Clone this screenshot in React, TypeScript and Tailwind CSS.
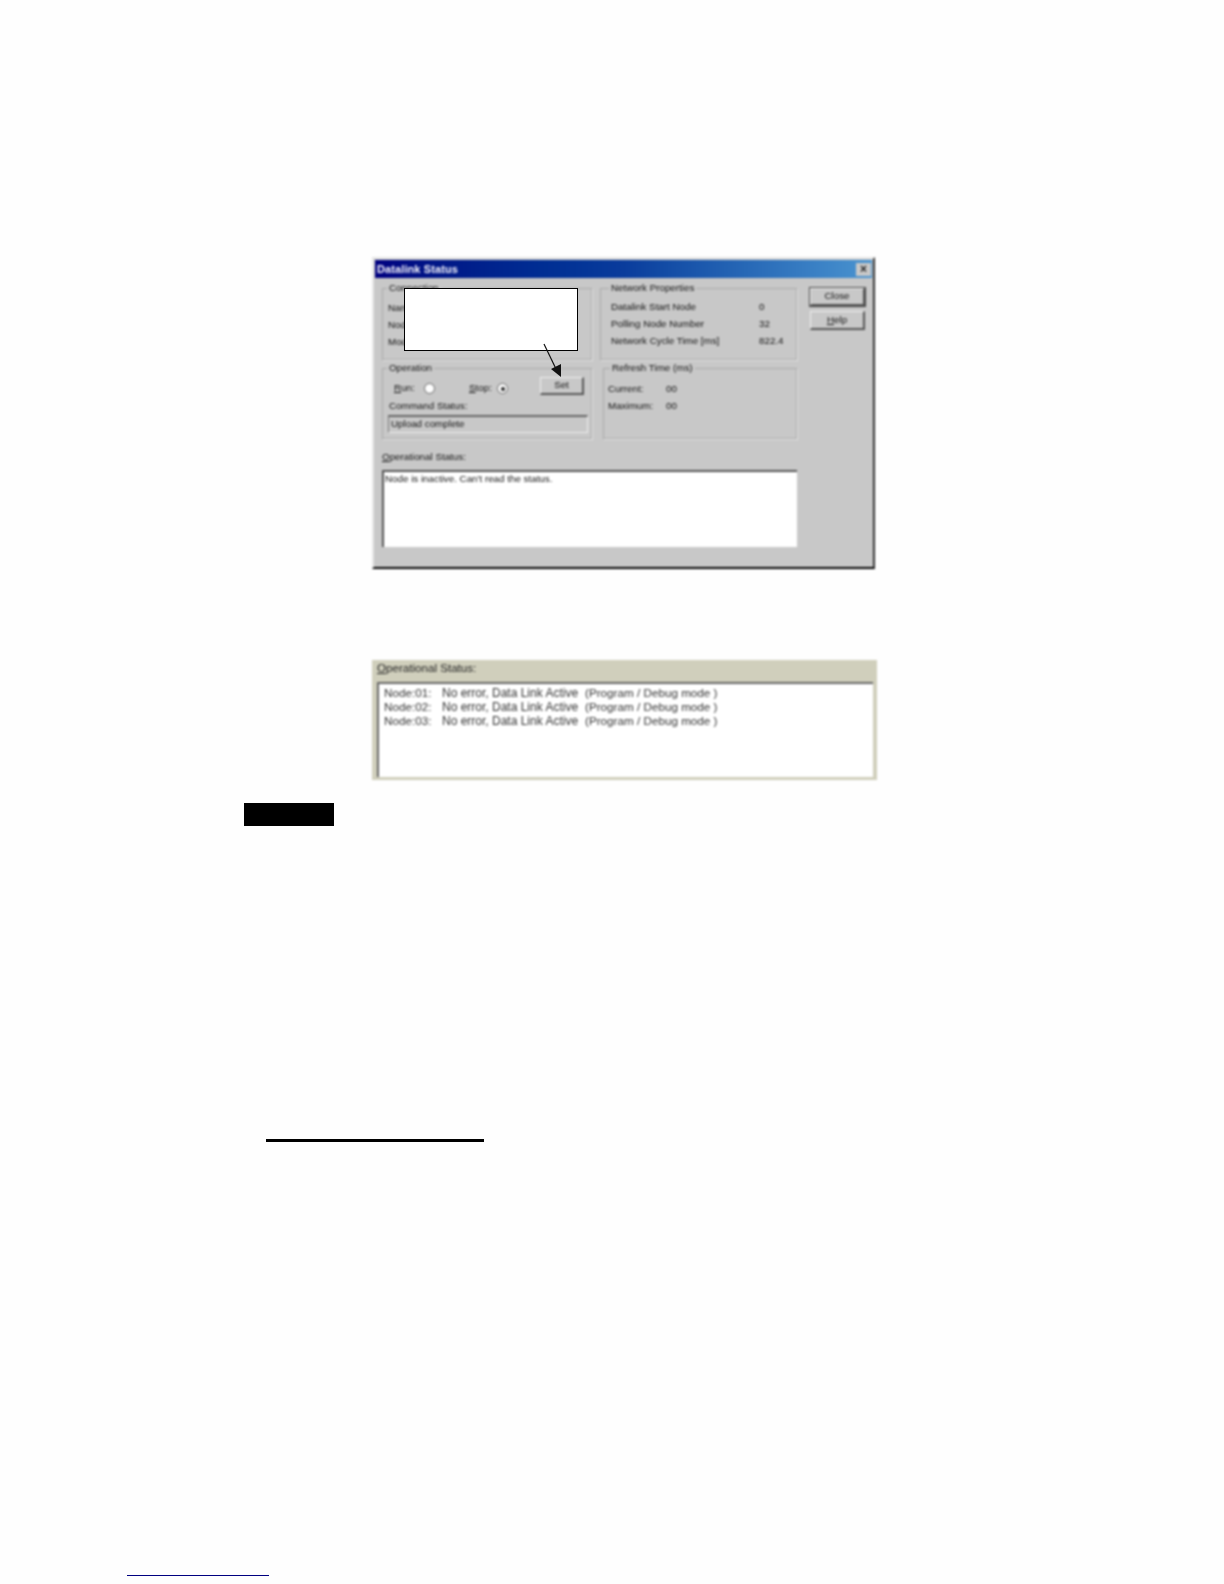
const font = "font-['Liberation_Sans',Arial,sans-serif]";

function Group({ title, className, legend, children }: { title: string; className: string; legend: string; children?: React.ReactNode }) {
  return (
    <div className={`relative border border-[#a9a9a9] shadow-[1px_1px_0_#e4e4e4] ${className}`}>
      <span className={`absolute -top-[8px] bg-[#c8c8c8] px-[2px] leading-[14px] ${legend}`}>{title}</span>
      {children}
    </div>
  );
}

function Btn({ children, className }: { children: React.ReactNode; className: string }) {
  return (
    <div
      className={`flex items-center justify-center border-t border-l border-t-[#f0f0f0] border-l-[#f0f0f0] border-r-2 border-b-2 border-r-[#555] border-b-[#555] ${className}`}
    >
      {children}
    </div>
  );
}

function Radio({ checked, className }: { checked?: boolean; className: string }) {
  return (
    <span className={`flex h-[11px] w-[11px] items-center justify-center rounded-full border border-[#666] bg-white ${className}`}>
      {checked && <span className="h-[4px] w-[4px] rounded-full bg-[#222]" />}
    </span>
  );
}

function Row({ label, value }: { label: string; value: string }) {
  return (
    <div className="flex h-[17px] items-center">
      <span className="w-[148px]">{label}</span>
      <span>{value}</span>
    </div>
  );
}

function DatalinkDialog() {
  return (
    <div className="flex h-[312px] w-[503px] flex-col border-t-2 border-l-2 border-t-[#e6e6e6] border-l-[#e6e6e6] border-r-2 border-b-2 border-r-[#333] border-b-[#000] bg-[#c8c8c8] text-[9.8px] text-[#111]">
      <div className="mx-[1px] mt-[1px] flex h-[18px] items-center justify-between bg-gradient-to-r from-[#000080] via-[#0a3c9c] to-[#4a94d0] pl-[2px] pr-[1px] text-[11px] font-bold tracking-[0.1px] text-[#f4f4fc]">
        <span>Datalink Status</span>
        <span className="flex h-[13px] w-[15px] items-center justify-center bg-[#c8c8c8] text-[12px] leading-none text-[#222]">×</span>
      </div>

      <div className="mt-[10px] flex">
        <div className="ml-[8px] flex w-[415px] flex-col">
          <div className="flex gap-[8px]">
            <Group title="Connection" legend="left-[4px]" className="h-[72px] w-[210px]">
              <div className="pl-[5px] pt-[10px]">
                <div className="h-[17px] leading-[17px]">Name:</div>
                <div className="h-[17px] leading-[17px]">Node:</div>
                <div className="h-[17px] leading-[17px]">Mode:</div>
              </div>
            </Group>
            <Group title="Network Properties" legend="left-[8px]" className="h-[72px] w-[197px]">
              <div className="pl-[10px] pt-[10px]">
                <Row label="Datalink Start Node" value="0" />
                <Row label="Polling Node Number" value="32" />
                <Row label="Network Cycle Time [ms]" value="822.4" />
              </div>
            </Group>
          </div>

          <div className="mt-[8px] flex gap-[11px]">
            <Group title="Operation" legend="left-[4px]" className="h-[71px] w-[210px]">
              <div className="mt-[8px] flex h-[18px] items-center pl-[11px] pr-[7px]">
                <span className="mt-[5px] w-[30px]"><span className="underline">R</span>un:</span>
                <Radio className="mt-[5px]" />
                <span className="ml-[34px] mt-[5px] w-[28px]"><span className="underline">S</span>top:</span>
                <Radio checked className="mt-[5px]" />
                <Btn className="ml-auto h-[18px] w-[44px]">Set</Btn>
              </div>
              <div className="pl-[6px] pt-[4px] leading-[14px]">Command Status:</div>
              <div className="ml-[5px] mt-[2px] flex h-[18px] w-[200px] items-center border-t-2 border-l border-t-[#666] border-l-[#777] border-r border-b border-r-[#eee] border-b-[#eee] pl-[2px]">
                Upload complete
              </div>
            </Group>
            <Group title="Refresh Time (ms)" legend="left-[6px]" className="h-[71px] w-[194px]">
              <div className="pl-[4px] pt-[12px]">
                <div className="flex h-[17px] items-center"><span className="w-[58px]">Current:</span><span>00</span></div>
                <div className="flex h-[17px] items-center"><span className="w-[58px]">Maximum:</span><span>00</span></div>
              </div>
            </Group>
          </div>

          <div className="mt-[11px] leading-[14px]"><span className="underline">O</span>perational Status:</div>
          <div className="mt-[6px] h-[77px] border-t-2 border-l-2 border-t-[#555] border-l-[#555] bg-white pl-[1px] leading-[13px]">
            Node is inactive. Can't read the status.
          </div>
        </div>

        <div className="ml-[13px] flex flex-col gap-[5px]">
          <Btn className="h-[18px] w-[55px] outline outline-1 outline-[#444]">Close</Btn>
          <Btn className="h-[19px] w-[55px]"><span><span className="underline">H</span>elp</span></Btn>
        </div>
      </div>
    </div>
  );
}

function NodeLine({ node }: { node: string }) {
  return (
    <div className="flex h-[14px] items-center">
      <span className="w-[58px]">Node:{node}:</span>
      <span className="w-[143px] text-[12px]">No error, Data Link Active</span>
      <span>(Program / Debug mode )</span>
    </div>
  );
}

export default function App() {
  return (
    <div className={`${font} min-h-[1584px] w-[1224px] overflow-hidden bg-[#fefefe]`}>
      <div className="relative ml-[372px] mt-[257px] inline-block align-top">
        <div className="blur-[0.8px]">
          <DatalinkDialog />
        </div>
        {/* callout pasted over the screenshot */}
        <div className="absolute left-[32px] top-[31px] h-[63px] w-[174px] border-[1.5px] border-black bg-white" />
        <svg className="absolute left-[165px] top-[81px]" width="30" height="42" viewBox="0 0 30 42">
          <path d="M7 6 L20 33" stroke="#111" strokeWidth="1.2" fill="none" />
          <path d="M24 39 L14 31 L24 26 Z" fill="#111" />
        </svg>
      </div>

      <div className="ml-[372px] mt-[91px] h-[120px] w-[505px] bg-[#d0cfbc] blur-[0.8px]">
        <div className="flex h-[22px] items-end pb-[7px] pl-[5px] text-[11.6px] leading-[14px] text-[#222]">
          <span><span className="underline">O</span>perational Status:</span>
        </div>
        <div className="ml-[5px] mr-[4px] h-[95px] border-t-2 border-l-2 border-t-[#666] border-l-[#666] bg-white pl-[5px] pt-[2px] text-[11.7px] text-[#333]">
          <NodeLine node="01" />
          <NodeLine node="02" />
          <NodeLine node="03" />
        </div>
      </div>

      <div className="ml-[244px] mt-[23px] h-[23px] w-[90px] bg-black" />
      <div className="ml-[266px] mt-[313px] h-[3px] w-[218px] bg-black" />
      <div className="ml-[127px] mt-[433px] h-[1px] w-[142px] bg-[#000080]" />
    </div>
  );
}
